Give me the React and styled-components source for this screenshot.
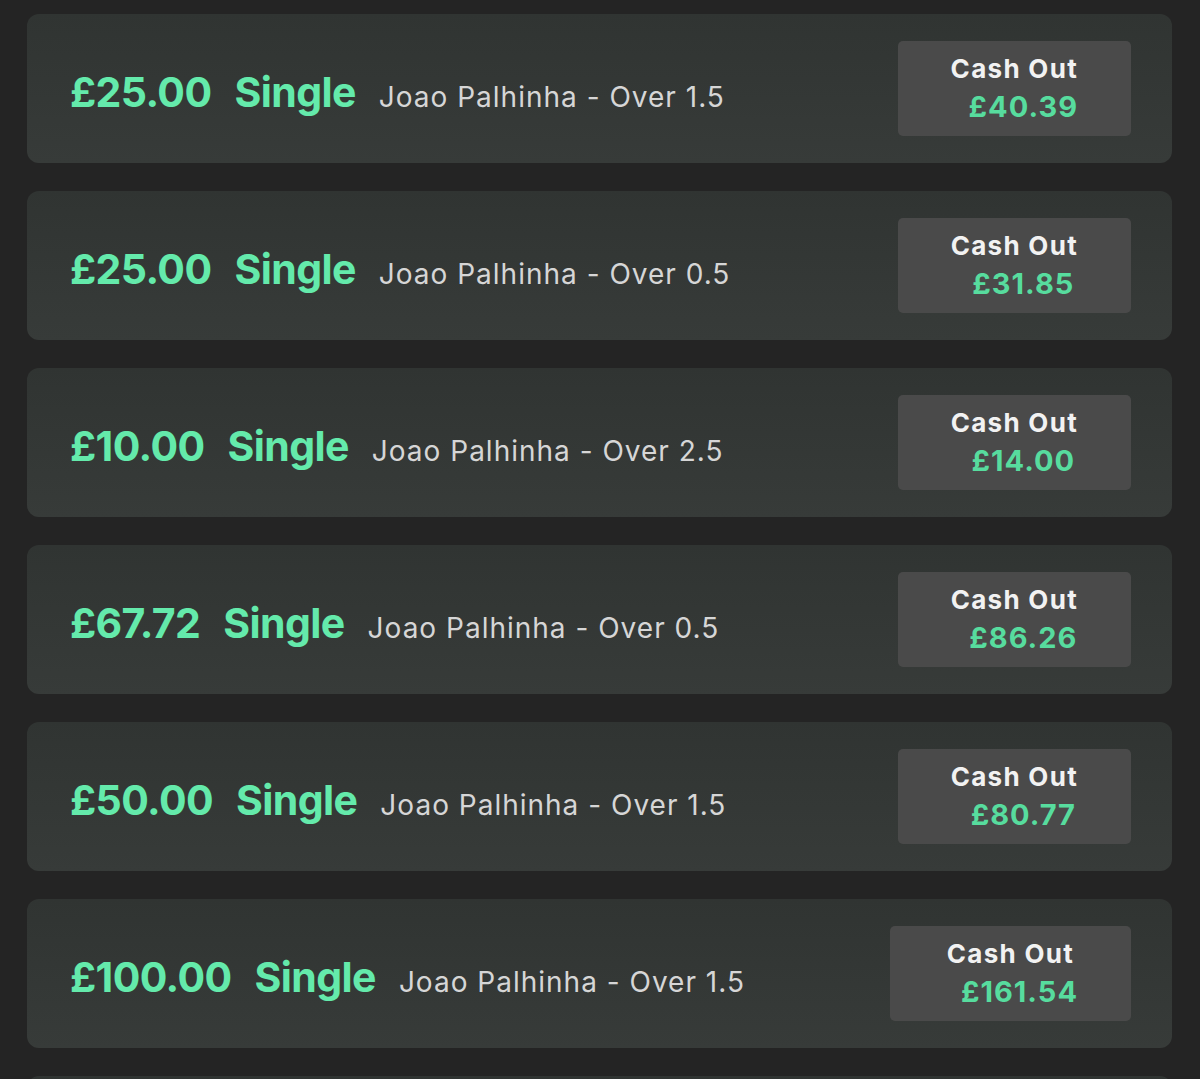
import React from "react";
import styled, { createGlobalStyle } from "styled-components";

const GlobalStyle = createGlobalStyle`
  html, body {
    margin: 0;
    padding: 0;
    background: #242424;
    overflow: hidden;
  }
  body {
    font-family: Inter, "Noto Sans", "Liberation Sans", sans-serif;
  }
`;

const List = styled.div`
  display: flex;
  flex-direction: column;
  gap: 28px;
  padding: 14px 28px 0 27px;
`;

const BetCard = styled.div`
  height: 149px;
  flex-shrink: 0;
  box-sizing: border-box;
  display: flex;
  align-items: center;
  justify-content: space-between;
  padding: 0 41px 0 43px;
  border-radius: 12px;
  background: linear-gradient(180deg, #303432 0%, #373b39 100%);
`;

const BetInfo = styled.div`
  display: flex;
  align-items: baseline;
  gap: 23px;
  padding-top: 6px;
`;

const Stake = styled.span`
  font-size: 41px;
  font-weight: 700;
  color: #64eaab;
  letter-spacing: -0.6px;
`;

const Selection = styled.span`
  font-size: 28px;
  font-weight: 400;
  color: #d6d6d6;
  letter-spacing: 1px;
`;

const CashOutButton = styled.div`
  display: flex;
  flex-direction: column;
  align-items: center;
  justify-content: center;
  height: 95px;
  padding: 0 53px;
  border-radius: 5px;
  background: #4a4a4a;
`;

const CashLabel = styled.span`
  font-size: 26px;
  font-weight: 700;
  color: #f2f2f2;
  letter-spacing: 1.3px;
  line-height: 36px;
`;

const CashAmount = styled.span`
  font-size: 29px;
  font-weight: 700;
  color: #57dc9e;
  letter-spacing: 1px;
  line-height: 40px;
  padding-left: 18px;
`;

const bets = [
  { stake: "£25.00", pick: "Joao Palhinha - Over 1.5", cash: "£40.39" },
  { stake: "£25.00", pick: "Joao Palhinha - Over 0.5", cash: "£31.85" },
  { stake: "£10.00", pick: "Joao Palhinha - Over 2.5", cash: "£14.00" },
  { stake: "£67.72", pick: "Joao Palhinha - Over 0.5", cash: "£86.26" },
  { stake: "£50.00", pick: "Joao Palhinha - Over 1.5", cash: "£80.77" },
  { stake: "£100.00", pick: "Joao Palhinha - Over 1.5", cash: "£161.54" },
];

export default function App() {
  return (
    <>
      <GlobalStyle />
      <List>
        {bets.map((bet, i) => (
          <BetCard key={i}>
            <BetInfo>
              <Stake>{bet.stake}</Stake>
              <Stake>Single</Stake>
              <Selection>{bet.pick}</Selection>
            </BetInfo>
            <CashOutButton>
              <CashLabel>Cash Out</CashLabel>
              <CashAmount>{bet.cash}</CashAmount>
            </CashOutButton>
          </BetCard>
        ))}
        {/* next bet, just peeking in at the bottom edge */}
        <BetCard />
      </List>
    </>
  );
}
